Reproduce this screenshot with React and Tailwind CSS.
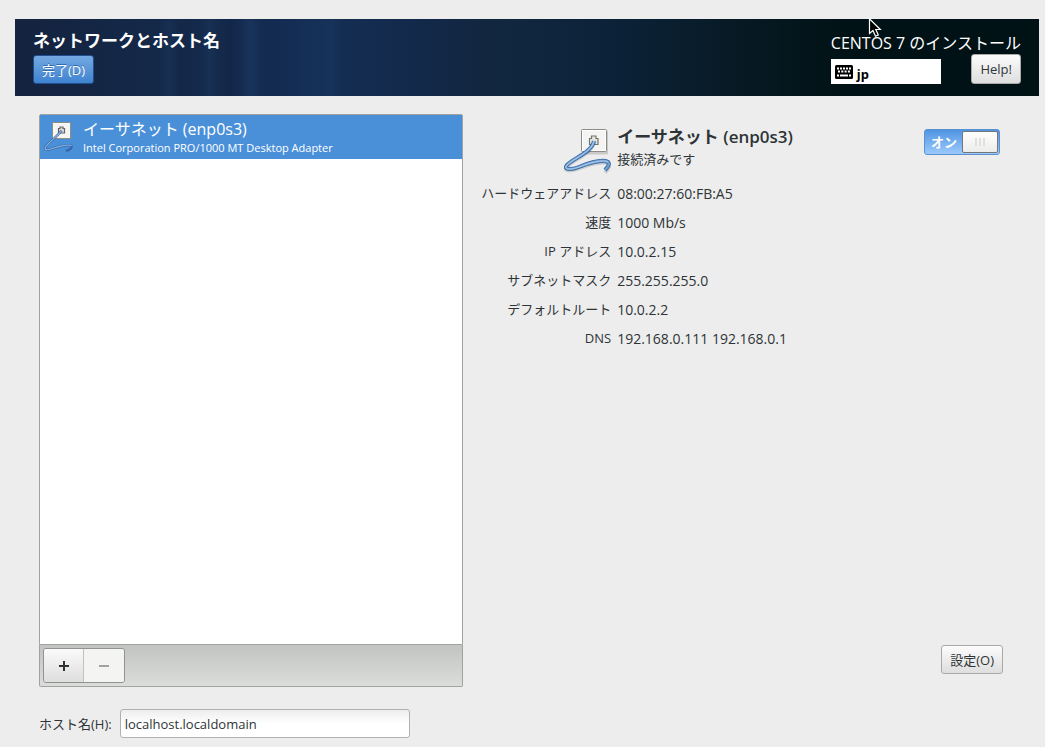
import React, { useState } from "react";

const details = [
  ["ハードウェアアドレス", "08:00:27:60:FB:A5"],
  ["速度", "1000 Mb/s"],
  ["IP アドレス", "10.0.2.15"],
  ["サブネットマスク", "255.255.255.0"],
  ["デフォルトルート", "10.0.2.2"],
  ["DNS", "192.168.0.111 192.168.0.1"],
];

function WiredIcon({ className }) {
  return (
    <svg viewBox="0 0 48 48" className={className} aria-hidden="true">
      <rect x="19" y="3.5" width="26" height="24" rx="1" fill="#000" opacity=".15" />
      <rect x="18.5" y="2.5" width="25" height="22" rx="1" fill="#f4f4f3" stroke="#8a8c88" />
      <rect x="19.5" y="3.5" width="23" height="20" fill="none" stroke="#fff" />
      <path d="M26.500 17.500V11.500H28.500V9H33V11.500H35V17.500Z" fill="#e4e4df" stroke="#73756f" strokeWidth="1.200" />
      <path d="M31 14C29 25 11 31 4 38C0 43 8 43 16 40C26 36 40 32 45 35C48 37 46 40 42 44" transform="translate(0 1.500)" fill="none" stroke="#000" strokeOpacity=".13" strokeWidth="4" />
      <path d="M31 14C29 25 11 31 4 38C0 43 8 43 16 40C26 36 40 32 45 35C47 37 45 40 42 43" fill="none" stroke="#3465a4" strokeWidth="4" />
      <path d="M31 14C29 25 11 31 4 38C0 43 8 43 16 40C26 36 40 32 45 35C47 37 45 40 42 43" fill="none" stroke="#729fcf" strokeWidth="2.400" />
      <path d="M31 14C29 25 11 31 4 38C0 43 8 43 16 40C26 36 40 32 45 35" fill="none" stroke="#b7d3f2" strokeWidth=".9" />
    </svg>
  );
}

function SmallWiredIcon({ className }) {
  return (
    <svg viewBox="0 0 32 32" className={className} aria-hidden="true">
      <rect x="8.500" y="1.500" width="18" height="16" fill="#f6f6f4" stroke="#8e8d86" />
      <path d="M14.500 12V7.500H16V6H19V7.500H20.500V12Z" fill="#ddd" stroke="#62645f" strokeWidth="1.200" />
      <path d="M17.500 9.500C13 16 5 21 1.500 26C-.5 30 5 29 10 27C17 25 26 23 27.500 25C28 27 25 29 22 30" fill="none" stroke="#315f9e" strokeOpacity=".8" strokeWidth="2.400" />
      <path d="M17.500 9.500C13 16 5 21 1.500 26C-.5 30 5 29 10 27C17 25 26 23 27.500 25" fill="none" stroke="#8cb4e2" strokeWidth="1.100" />
    </svg>
  );
}

function KeyboardIcon() {
  return (
    <svg viewBox="0 0 18 14" className="h-3.5 w-[18px]" aria-hidden="true">
      <rect width="18" height="14" rx="1.500" fill="#000" />
      <path d="M2 3.500H16" stroke="#fff" strokeWidth="2" strokeDasharray="2 1" />
      <path d="M3 6.500H15" stroke="#fff" strokeWidth="2" strokeDasharray="2 1.300" />
      <path d="M2 10.500H4M5 10.500H13M14 10.500H16" stroke="#fff" strokeWidth="2" />
    </svg>
  );
}

const lightButton =
  "rounded-[3px] border border-[#a8aaa8] bg-linear-to-b from-[#fcfcfc] to-[#dedede] px-2 text-[13px] text-[#2e3436]";

export default function App() {
  const [enabled, setEnabled] = useState(true);
  const [hostname, setHostname] = useState("localhost.localdomain");

  return (
    <div className="relative flex min-h-screen flex-col bg-[#ededed] pt-[19px] pb-[9px] font-['Open_Sans','Noto_Sans_CJK_JP',sans-serif] text-[13px] leading-5 text-[#2e3436]">
      <header className="mr-1.5 ml-[15px] flex h-[77px] items-start justify-between bg-[linear-gradient(90deg,transparent_14%,#4080c012_15%,transparent_16%,transparent_18%,#4080c012_19%,transparent_20%,#00001018_21%,transparent_22%,#4080c018_23%,transparent_24%,#00001010_25%,transparent_27%,#4080c012_31%,transparent_32%),linear-gradient(90deg,#14233f_0%,#142746_10%,#142a4c_20%,#142d54_26%,#132c50_34%,#13294b_39%,#12263f_46%,#10263f_50%,#0b2136_60%,#071a25_70%,#021418_79%,#001216_82%,#001216_100%)] px-[18px] text-white">
        <div className="flex flex-col items-start pt-2.5">
          <h1 className="text-[17px] leading-6 font-semibold">ネットワークとホスト名</h1>
          <button
            type="button"
            className="mt-0.5 h-[29px] rounded-[3px] border border-[#1f4f91] bg-linear-to-b from-[#73a8e1] to-[#3f84d0] px-2 text-[13px] [text-shadow:0_-1px_#2f6cb0]"
          >
            完了(D)
          </button>
        </div>
        <div className="pt-3">
          <p className="text-base leading-6">CENTOS 7 のインストール</p>
          <div className="flex items-start justify-between">
            <button type="button" className="mt-1 flex h-[25px] w-[110px] items-center gap-1 bg-white px-1 text-black">
              <KeyboardIcon />
              <span className="pt-1 font-['Noto_Sans',sans-serif] text-[13px] font-bold">jp</span>
            </button>
            <button type="button" className={`${lightButton} -mt-px h-[30px]`}>
              Help!
            </button>
          </div>
        </div>
      </header>

      <main className="mt-[18px] flex flex-1 pr-[42px] pl-[39px]">
        <section className="flex w-[44%] flex-col">
          <ul className="flex-1 rounded-t-xs border border-[#a1a3a0] bg-white">
            <li>
              <button type="button" aria-pressed="true" className="flex h-11 w-full items-center bg-[#4a90d9] pl-1 text-left text-white">
                <SmallWiredIcon className="size-8" />
                <span className="ml-[7px] flex flex-col pt-px">
                  <span className="text-base leading-5">イーサネット (enp0s3)</span>
                  <span className="text-[11px] leading-[18px]">Intel Corporation PRO/1000 MT Desktop Adapter</span>
                </span>
              </button>
            </li>
          </ul>
          <div className="flex h-[42px] items-start rounded-b-xs border border-t-0 border-[#a1a3a0] bg-linear-to-b from-[#c1c4c0] to-[#dbddda] p-[3px]">
            <div className="flex h-[35px] overflow-hidden rounded-[3px] border border-[#8f9490]">
              <button type="button" aria-label="追加" className="flex w-10 items-center justify-center border-r border-[#c0c2bf] bg-linear-to-b from-[#fafafa] to-[#dedede]">
                <svg viewBox="0 0 10 10" className="size-2.5" aria-hidden="true">
                  <path d="M0 5H10M5 0V10" stroke="#2e3436" strokeWidth="2" />
                </svg>
              </button>
              <button type="button" aria-label="削除" disabled className="flex w-10 items-center justify-center bg-[#f4f4f2]">
                <svg viewBox="0 0 10 10" className="size-2.5" aria-hidden="true">
                  <path d="M0 5H10" stroke="#a0a4a1" strokeWidth="2" />
                </svg>
              </button>
            </div>
          </div>
        </section>

        <section className="flex flex-1 flex-col pt-2.5 pl-[18px]">
          <div className="flex items-start justify-between pr-[3px]">
            <div className="grid grid-cols-[max-content_auto] gap-x-1.5">
              <WiredIcon className="size-12 self-end justify-self-end" />
              <div className="pt-px pb-1.5">
                <h2 className="text-[17px] leading-6 font-semibold">イーサネット (enp0s3)</h2>
                <p>接続済みです</p>
              </div>
              <dl className="col-span-2 mt-1 grid grid-cols-subgrid leading-[29px]">
                {details.map(([name, value]) => (
                  <React.Fragment key={name}>
                    <dt className="text-right">{name}</dt>
                    <dd className="text-sm leading-[29px]">{value}</dd>
                  </React.Fragment>
                ))}
              </dl>
            </div>
            <label className="mt-[5px] flex h-[26px] w-[76px] items-center rounded-[3px] border border-[#5a91ce] bg-linear-to-b from-[#4f95e2] to-[#9cc9fb] p-px">
              <input
                type="checkbox"
                role="switch"
                aria-label="イーサネット (enp0s3)"
                checked={enabled}
                onChange={(e) => setEnabled(e.target.checked)}
                className="peer sr-only"
              />
              <span className="flex-1 text-center text-[13px] font-bold text-white">{enabled ? "オン" : "オフ"}</span>
              <span className="flex h-[22px] w-9 items-center justify-center gap-0.5 rounded-xs border border-[#73777a] bg-linear-to-b from-white to-[#ececea] peer-not-checked:order-first">
                <span className="h-2 w-0.5 bg-[#e0e0df]" />
                <span className="h-2 w-0.5 bg-[#e0e0df]" />
                <span className="h-2 w-0.5 bg-[#e0e0df]" />
              </span>
            </label>
          </div>
          <button type="button" className={`${lightButton} mt-auto mb-[13px] h-[29px] self-end`}>
            設定(O)
          </button>
        </section>
      </main>

      <div className="mt-[22px] flex items-center gap-2 px-[39px]">
        <label htmlFor="hostname">ホスト名(H):</label>
        <input
          id="hostname"
          type="text"
          value={hostname}
          onChange={(e) => setHostname(e.target.value)}
          className="h-[29px] w-[290px] rounded-[3px] border border-[#b0b2b0] bg-linear-to-b from-[#ededed] to-white to-50% px-1 text-[13px]"
        />
      </div>

      <svg viewBox="0 0 14 20" className="pointer-events-none absolute top-[18px] left-[868px] h-5 w-3.5" aria-hidden="true">
        <path d="M1.500 .8V15.500L5 12.500L7.500 18.300L10.300 17L7.800 11.500H12.300Z" fill="#000" stroke="#fff" strokeWidth="1.200" />
      </svg>
    </div>
  );
}
